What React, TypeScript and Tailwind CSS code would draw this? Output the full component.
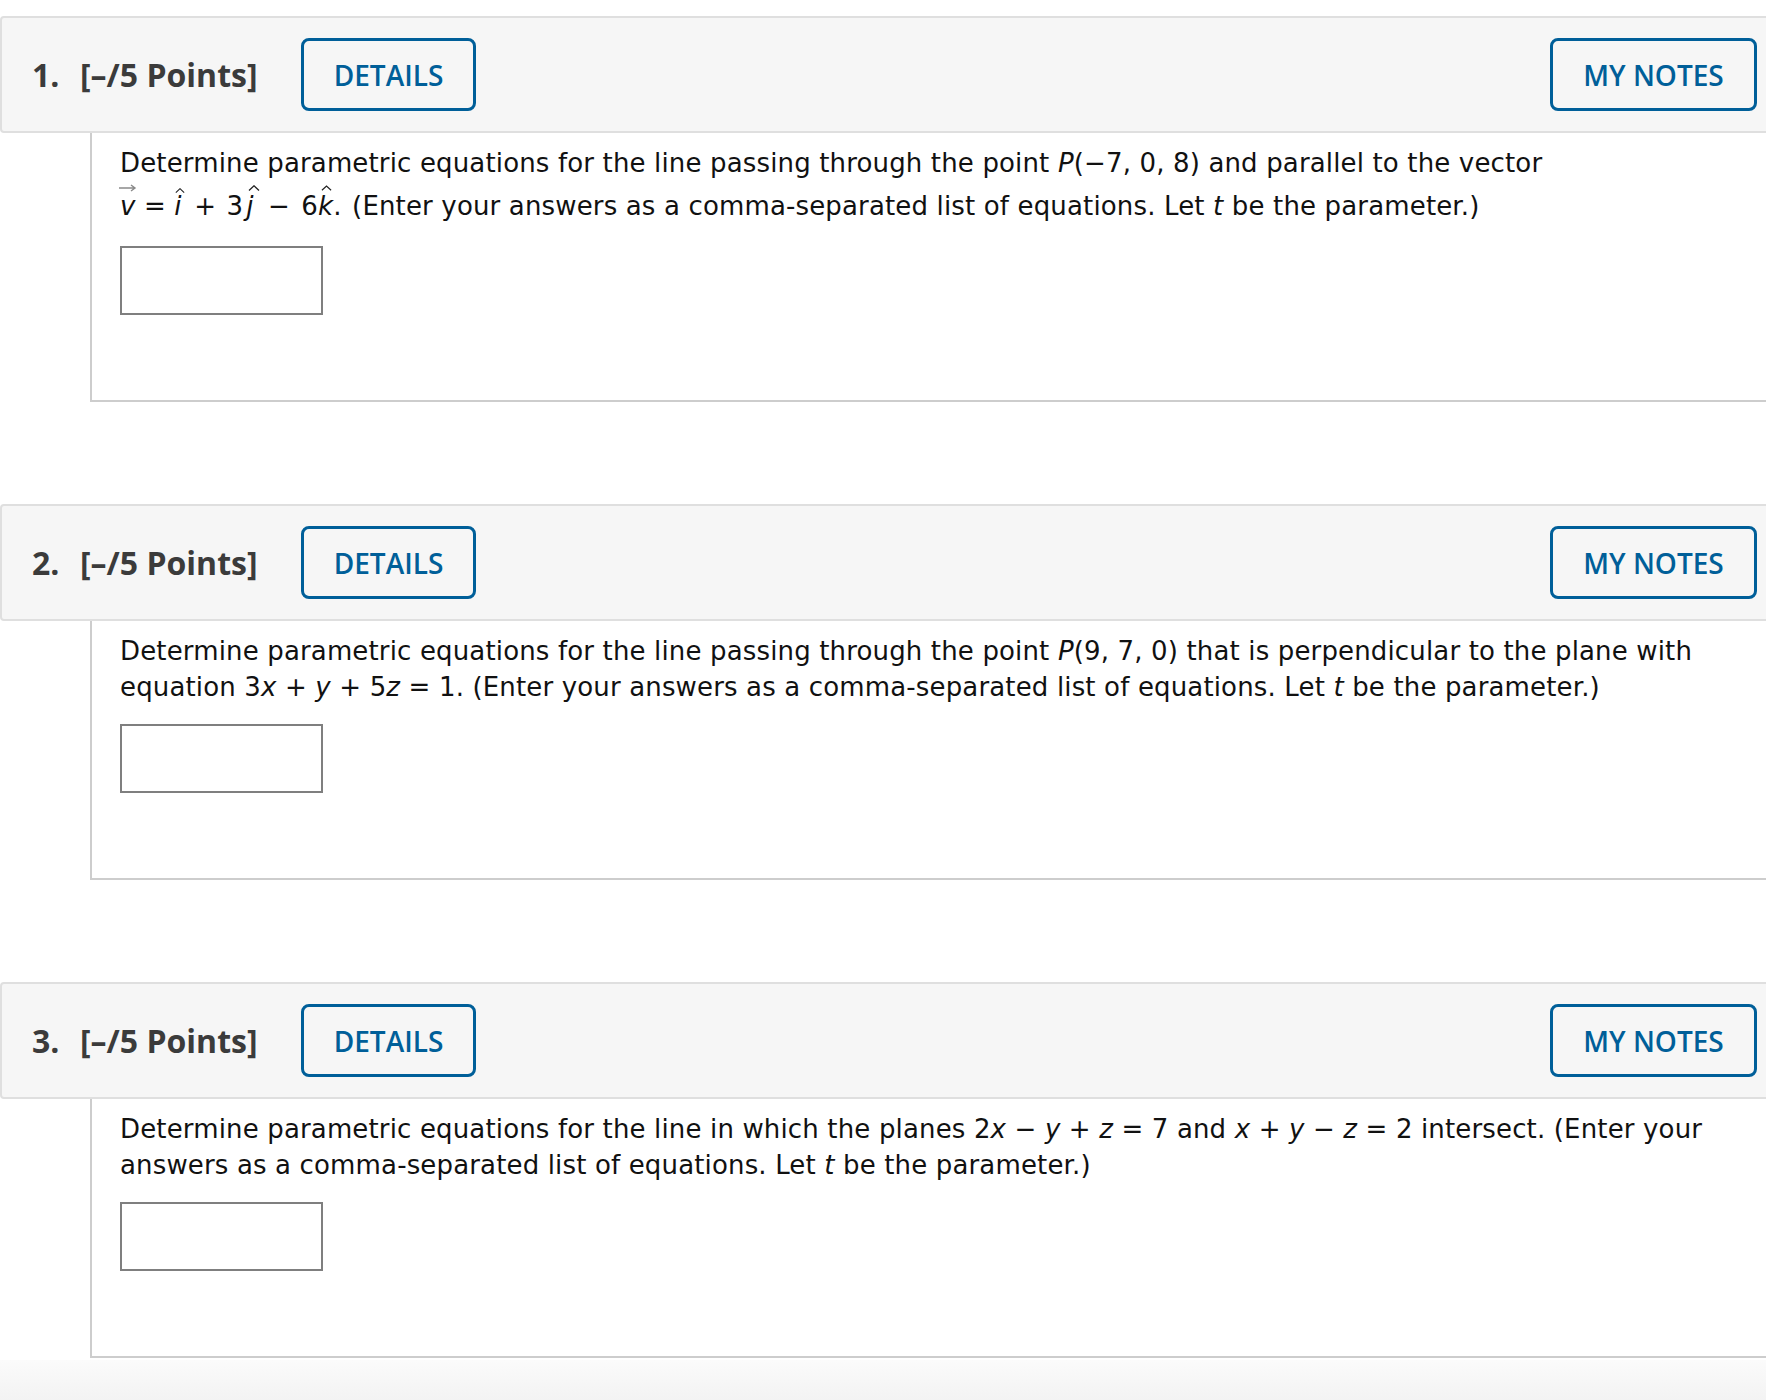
import React from "react";

const Hat = ({ className }: { className: string }) => (
  <svg
    className={className}
    viewBox="0 0 12 6"
    fill="none"
    stroke="#222"
    strokeWidth="1.3"
  >
    <path d="M1 5.5L6 0.8L11 5.5" />
  </svg>
);

const VecV = () => (
  <span className="relative inline-block italic">
    v
    <svg
      className="absolute left-[-1px] top-[-4px] w-[18px] h-[8px]"
      viewBox="0 0 18 8"
      fill="none"
      stroke="#8a8a8a"
      strokeWidth="1.4"
    >
      <path d="M0 4H16M12 1L16 4L12 7" />
    </svg>
  </span>
);

const I = ({ children }: { children: React.ReactNode }) => (
  <span className="italic">{children}</span>
);

interface Problem {
  num: number;
  lines: React.ReactNode[];
  vectorLine?: boolean;
}

const problems: Problem[] = [
  {
    num: 1,
    vectorLine: true,
    lines: [
      <>
        Determine parametric equations for the line passing through the point{" "}
        <I>P</I>(−7, 0, 8) and parallel to the vector
      </>,
      <>
        <VecV /> ={" "}
        <span className="relative inline-block italic mr-[4px]">
          i
          <Hat className="absolute left-[1px] top-[0px] w-[10px] h-[5px]" />
        </span>{" "}
        + <span className="ml-[2px]">3</span>
        <span className="relative inline-block italic ml-[3px] mr-[6px]">
          j
          <Hat className="absolute left-[2px] top-[-3px] w-[12px] h-[6px]" />
        </span>{" "}
        − <span className="ml-[3px]">6</span>
        <span className="relative inline-block italic">
          k
          <Hat className="absolute left-[3px] top-[-3px] w-[11px] h-[6px]" />
        </span>
        . <span className="ml-[2px]">(Enter your answers as a comma-separated list of equations. Let</span>{" "}
        <I>t</I> be the parameter.)
      </>,
    ],
  },
  {
    num: 2,
    lines: [
      <>
        Determine parametric equations for the line passing through the point{" "}
        <I>P</I>(9, 7, 0) that is perpendicular to the plane with
      </>,
      <>
        equation 3<I>x</I> + <I>y</I> + 5<I>z</I> = 1. (Enter your answers as a
        comma-separated list of equations. Let <I>t</I> be the parameter.)
      </>,
    ],
  },
  {
    num: 3,
    lines: [
      <>
        Determine parametric equations for the line in which the planes 2
        <I>x</I> − <I>y</I> + <I>z</I> = 7 and <I>x</I> + <I>y</I> − <I>z</I> =
        2 intersect. (Enter your
      </>,
      <>
        answers as a comma-separated list of equations. Let <I>t</I> be the
        parameter.)
      </>,
    ],
  },
];

const ProblemBlock = ({ p }: { p: Problem }) => (
  <div className="mb-[102px]">
    {/* Header */}
    <div className="flex items-center h-[117px] border-2 border-[#dfdfdf] rounded-[4px] bg-[#f6f6f6] pl-[30px] pr-[31px] font-['Open_Sans',sans-serif]">
      <span className="inline-block w-[48px] text-[32px] font-bold text-[#3b3b3b]">
        {p.num}.
      </span>
      <span className="inline-block w-[221px] text-[32px] font-bold text-[#3b3b3b]">
        [–/5 Points]
      </span>
      <button className="w-[175px] h-[73px] border-[3px] border-[#005f99] rounded-[8px] text-[28px] font-semibold text-[#005f99] flex items-center justify-center">
        DETAILS
      </button>
      <button className="ml-auto w-[207px] h-[73px] border-[3px] border-[#005f99] rounded-[8px] text-[28px] font-semibold text-[#005f99] flex items-center justify-center">
        MY NOTES
      </button>
    </div>

    {/* Body */}
    <div className="ml-[90px] border-l-2 border-b-2 border-[#cdcdcd] pl-[28px] pt-[12px] pb-[85px] font-['DejaVu_Sans','Liberation_Sans',sans-serif] text-[26px] leading-[36px] tracking-[0.15px] text-[#111]">
      <div className="whitespace-nowrap">{p.lines[0]}</div>
      <div className={p.vectorLine ? "whitespace-nowrap mt-[7px]" : "whitespace-nowrap"}>
        {p.lines[1]}
      </div>
      <div
        className={
          p.vectorLine
            ? "mt-[22px] w-[203px] h-[69px] border-2 border-[#7f7f7f] bg-white"
            : "mt-[19px] w-[203px] h-[69px] border-2 border-[#7f7f7f] bg-white"
        }
      />
    </div>
  </div>
);

export default function App() {
  return (
    <div className="w-full h-[1400px] overflow-hidden bg-white">
      <div className="w-[1790px] pt-[16px]">
        {problems.map((p) => (
          <ProblemBlock key={p.num} p={p} />
        ))}
      </div>
      <div className="-mt-[100px] h-[60px] bg-linear-to-b from-[#fbfbfb] to-[#efefef]" />
    </div>
  );
}
